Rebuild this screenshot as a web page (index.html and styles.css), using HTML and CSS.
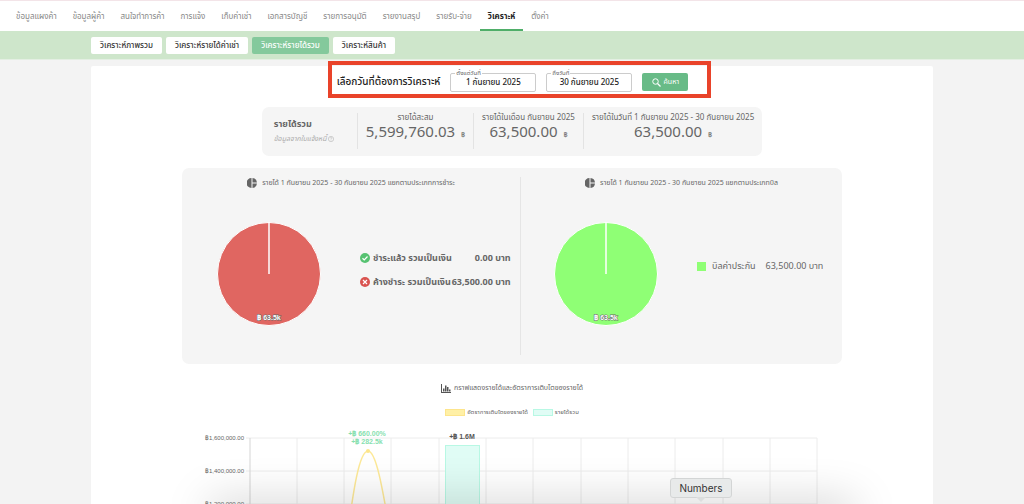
FILE: index.html
```html
<!DOCTYPE html>
<html lang="th">
  <head>
    <meta charset="UTF-8" />
    <meta name="viewport" content="width=device-width, initial-scale=1.0" />
    <title>วิเคราะห์รายได้รวม</title>
    <link rel="stylesheet" href="styles.css" />
  </head>
  <body>
    <!-- main menu -->
    <nav class="menu">
      <a class="menu-item" href="#">ข้อมูลแผงค้า</a>
      <a class="menu-item" href="#">ข้อมูลผู้ค้า</a>
      <a class="menu-item" href="#">สนใจทำการค้า</a>
      <a class="menu-item" href="#">การแจ้ง</a>
      <a class="menu-item" href="#">เก็บค่าเช่า</a>
      <a class="menu-item" href="#">เอกสารบัญชี</a>
      <a class="menu-item" href="#">รายการอนุมัติ</a>
      <a class="menu-item" href="#">รายงานสรุป</a>
      <a class="menu-item" href="#">รายรับ-จ่าย</a>
      <a class="menu-item active" href="#">วิเคราะห์</a>
      <a class="menu-item" href="#">ตั้งค่า</a>
    </nav>

    <div class="tabs">
      <button class="tab" type="button">วิเคราะห์ภาพรวม</button>
      <button class="tab" type="button">วิเคราะห์รายได้ค่าเช่า</button>
      <button class="tab active" type="button">วิเคราะห์รายได้รวม</button>
      <button class="tab" type="button">วิเคราะห์สินค้า</button>
    </div>

    <main class="card">
      <form class="search">
        <h1 class="search-title">เลือกวันที่ต้องการวิเคราะห์</h1>
        <div class="field">
          <label class="field-label" for="from">ตั้งแต่วันที่</label>
          <input class="field-input" id="from" type="text" value="1 กันยายน 2025" />
        </div>
        <div class="field">
          <label class="field-label" for="to">ถึงวันที่</label>
          <input class="field-input" id="to" type="text" value="30 กันยายน 2025" />
        </div>
        <button class="search-button" type="button">
          <svg width="9" height="9" viewBox="0 0 18 18">
            <circle cx="7" cy="7" r="5.5" fill="none" stroke="#fff" stroke-width="2" />
            <path d="M11 11l6 6" stroke="#fff" stroke-width="2.4" />
          </svg>
          ค้นหา
        </button>
      </form>

      <section class="summary">
        <div class="summary-head">
          <h2 class="summary-title">รายได้รวม</h2>
          <p class="summary-note">
            ข้อมูลจากใบแจ้งหนี้
            <svg width="6" height="6" viewBox="0 0 12 12" fill="none" stroke="#aaa">
              <circle cx="6" cy="6" r="5.3" />
              <path d="M4.3 4.7c0-2.4 3.4-2.2 3.4-.2C7.7 5.7 6 5.7 6 7.2M6 8.3v1" />
            </svg>
          </p>
        </div>
        <div class="summary-item">
          <span>รายได้สะสม</span>
          <p class="amount">5,599,760.03 <small>฿</small></p>
        </div>
        <div class="summary-item">
          <span>รายได้ในเดือน กันยายน 2025</span>
          <p class="amount">63,500.00 <small>฿</small></p>
        </div>
        <div class="summary-item">
          <span>รายได้ในวันที่ 1 กันยายน 2025 - 30 กันยายน 2025</span>
          <p class="amount">63,500.00 <small>฿</small></p>
        </div>
      </section>

      <section class="panel">
        <div class="pie-box">
          <h3 class="pie-title">
            <svg width="10" height="10" viewBox="0 0 20 20" fill="#666">
              <path d="M9 0v20A10 10 0 0 1 9 0zM11 0a10 10 0 0 1 9 9h-9zM11 11h9a10 10 0 0 1-9 9z" />
            </svg>
            รายได้ 1 กันยายน 2025 - 30 กันยายน 2025 แยกตามประเภทการชำระ
          </h3>
          <div class="pie-row">
            <svg class="pie" width="104" height="104" viewBox="0 0 104 104">
              <circle cx="52" cy="52" r="51.5" fill="#e06661" stroke="#fff" />
              <path d="M52 0v52" stroke="#fff" stroke-width="1.5" />
              <text class="pie-value" x="52" y="98">฿ 63.5k</text>
            </svg>
            <table class="legend bold">
              <tr>
                <td class="legend-icon">
                  <svg width="10" height="10" viewBox="0 0 20 20" fill="none" stroke="#fff" stroke-width="2.4">
                    <circle cx="10" cy="10" r="10" fill="#56c271" stroke="none" />
                    <path d="M5 10.5l3.5 3.5L15 7" />
                  </svg>
                </td>
                <td>ชำระแล้ว รวมเป็นเงิน</td>
                <td class="legend-value">0.00 บาท</td>
              </tr>
              <tr>
                <td class="legend-icon">
                  <svg width="10" height="10" viewBox="0 0 20 20" fill="none" stroke="#fff" stroke-width="2.4">
                    <circle cx="10" cy="10" r="10" fill="#d9534f" stroke="none" />
                    <path d="M6 6l8 8M14 6l-8 8" />
                  </svg>
                </td>
                <td>ค้างชำระ รวมเป็นเงิน</td>
                <td class="legend-value">63,500.00 บาท</td>
              </tr>
            </table>
          </div>
        </div>
        <div class="pie-box">
          <h3 class="pie-title">
            <svg width="10" height="10" viewBox="0 0 20 20" fill="#666">
              <path d="M9 0v20A10 10 0 0 1 9 0zM11 0a10 10 0 0 1 9 9h-9zM11 11h9a10 10 0 0 1-9 9z" />
            </svg>
            รายได้ 1 กันยายน 2025 - 30 กันยายน 2025 แยกตามประเภทบิล
          </h3>
          <div class="pie-row">
            <svg class="pie" width="104" height="104" viewBox="0 0 104 104">
              <circle cx="52" cy="52" r="51.5" fill="#8fff75" stroke="#fff" />
              <path d="M52 0v52" stroke="#fff" stroke-width="1.5" />
              <text class="pie-value" x="52" y="98">฿ 63.5k</text>
            </svg>
            <table class="legend single">
              <tr>
                <td class="legend-icon"><span class="swatch"></span></td>
                <td>บิลค่าประกัน</td>
                <td class="legend-value">63,500.00 บาท</td>
              </tr>
            </table>
          </div>
        </div>
      </section>

      <!-- income chart -->
      <section class="chart">
        <h3 class="chart-title">
          <svg width="10" height="9" viewBox="0 0 20 18" fill="#555">
            <path d="M0 0h2v16h18v2H0zM4 9h3v6H4zM8 3h3v12H8zM12 6h3v9h-3zM16 11h3v4h-3z" />
          </svg>
          กราฟแสดงรายได้และอัตราการเติบโตของรายได้
        </h3>
        <div class="chart-keys">
          <span class="key"><i class="key-box yellow"></i>อัตราการเติบโตของรายได้</span>
          <span class="key"><i class="key-box mint"></i>รายได้รวม</span>
        </div>
        <svg class="chart-plot" viewBox="0 0 660 120">
          <g class="grid">
            <path d="M64 20H635M64 53H635M64 86H635" />
            <path d="M115 20V120M162 20V120M209 20V120M257 20V120M304 20V120M351 20V120M399 20V120M446 20V120M493 20V120M541 20V120M588 20V120M635 20V120" />
            <path class="axis" d="M68 20V120" />
          </g>
          <rect x="263.5" y="27.5" width="34" height="100" fill="#e0fcf5" stroke="#b8f8e4" />
          <path d="M165 120C171 75 177 33 186 33S202 80 209 120" fill="none" stroke="#fde998" stroke-width="1.5" />
          <circle cx="186" cy="33" r="2" fill="#fde58c" />
          <g class="axis-text">
            <text x="62" y="22">฿1,600,000.00</text>
            <text x="62" y="55">฿1,400,000.00</text>
            <text x="62" y="88">฿1,200,000.00</text>
          </g>
          <text class="point green" x="185" y="18">+฿ 660.00%</text>
          <text class="point green" x="185" y="26">+฿ 282.5k</text>
          <text class="point" x="280" y="21">+฿ 1.6M</text>
        </svg>
      </section>
    </main>

    <div class="dock-shadow"></div>
    <div class="dock-tip">Numbers</div>
  </body>
</html>
```
FILE: styles.css
```css
* {
  box-sizing: border-box;
}

body {
  margin: 0;
  height: 100vh;
  overflow: hidden;
  display: flex;
  flex-direction: column;
  background: #f3f3f3;
  color: #666;
  font-family: "Noto Sans", "Noto Sans Thai", sans-serif;
  font-size: 8px;
}

h1,
h2,
h3,
p {
  margin: 0;
  font-weight: normal;
}

button,
input {
  font-family: inherit;
}

svg {
  flex: none;
}

/* menu */
.menu {
  flex: none;
  display: flex;
  height: 31px;
  padding-left: 8px;
  background: #fff;
  border-top: 1px solid #f3e4e8;
}

.menu-item {
  padding: 0 8px;
  line-height: 29px;
  color: #888;
  text-decoration: none;
  white-space: nowrap;
}

.menu-item.active {
  color: #222;
  font-weight: bold;
  border-bottom: 2px solid #4fae69;
}

/* tabs */
.tabs {
  flex: none;
  display: flex;
  align-items: center;
  gap: 4px;
  height: 29px;
  padding: 0 91px;
  background: #cee6cb;
  border-bottom: 1px solid #e4efe3;
}

.tab {
  height: 17px;
  padding: 0 9px;
  border: 0;
  border-radius: 2px;
  background: #fff;
  color: #333;
  font-size: 8px;
  font-weight: 500;
  white-space: nowrap;
}

.tab.active {
  background: #84c99c;
  color: #fff;
}

.card {
  flex: 1;
  display: flex;
  flex-direction: column;
  align-items: center;
  min-height: 0;
  margin: 6px 91px 0;
  background: #fff;
  border-radius: 2px 2px 0 0;
}

/* search */
.search {
  flex: none;
  display: flex;
  align-items: center;
  gap: 10px;
  height: 37px;
  margin-top: -5px;
  margin-left: 15px;
  padding: 5px 19px 0 5px;
  border: 4px solid #e9432a;
}

.search-title {
  color: #222;
  font-size: 10px;
  font-weight: 500;
  white-space: nowrap;
}

.field {
  position: relative;
}

.field-label {
  position: absolute;
  top: -4px;
  left: 5px;
  padding: 0 1px;
  background: #fff;
  font-size: 6px;
  line-height: 8px;
}

.field-input {
  display: block;
  width: 86px;
  height: 19px;
  padding: 0;
  border: 1px solid #ccc;
  border-radius: 2px;
  color: #222;
  font-size: 8px;
  font-weight: 500;
  text-align: center;
}

.search-button {
  display: flex;
  align-items: center;
  justify-content: center;
  gap: 3px;
  width: 46px;
  height: 18px;
  padding: 0;
  border: 0;
  border-radius: 2px;
  background: #68bb87;
  color: #fff;
  font-size: 7px;
}

/* summary */
.summary {
  flex: none;
  display: flex;
  height: 49px;
  margin-top: 9px;
  padding: 6px 0 7px;
  background: #f5f5f5;
  border-radius: 7px;
}

.summary-head {
  width: 95px;
  padding: 3px 0 0 12px;
}

.summary-title {
  font-size: 9px;
  font-weight: bold;
  line-height: 15px;
}

.summary-note {
  display: flex;
  align-items: center;
  gap: 1px;
  color: #aaa;
  font-size: 7px;
  font-style: italic;
  line-height: 15px;
  white-space: nowrap;
}

.summary-item {
  padding: 0 8px;
  border-left: 1px solid #e3e3e3;
  text-align: center;
  line-height: 8px;
  white-space: nowrap;
}

.amount {
  font-size: 15px;
  line-height: 20px;
}

.amount small {
  margin-left: 2px;
  font-size: 7px;
}

/* pies */
.panel {
  flex: none;
  display: grid;
  grid-template-columns: 338px 1fr;
  width: 100%;
  max-width: 660px;
  height: 196px;
  margin-top: 12px;
  padding: 9px 0;
  background: #f5f5f5;
  border-radius: 7px;
}

.pie-box + .pie-box {
  border-left: 1px solid #e5e5e5;
}

.pie-title {
  display: flex;
  align-items: center;
  justify-content: center;
  gap: 5px;
  font-size: 7px;
  line-height: 12px;
}

.pie-row {
  display: flex;
  align-items: center;
  gap: 39px;
  margin-top: 33px;
  padding-left: 35px;
}

.pie-box + .pie-box .pie-row {
  padding-left: 33px;
}

.pie-value {
  fill: #fff;
  stroke: #666;
  stroke-width: 1px;
  paint-order: stroke;
  font: bold 7px "Liberation Sans", sans-serif;
  text-anchor: middle;
}

.legend {
  margin-bottom: 8px;
  border-collapse: collapse;
  font-size: 9px;
  white-space: nowrap;
}

.legend.bold {
  font-weight: bold;
}

.legend.single {
  margin-bottom: 16px;
}

.legend td {
  height: 24px;
  padding: 0;
}

.legend .legend-icon {
  width: 13px;
}

.legend.single .legend-icon {
  width: 15px;
}

.legend-icon svg {
  display: block;
}

.legend-value {
  text-align: right;
}

.legend.single .legend-value {
  padding-left: 10px;
}

.swatch {
  display: block;
  width: 9px;
  height: 9px;
  background: #8fff75;
}

/* chart */
.chart {
  flex: none;
  width: 100%;
  max-width: 660px;
  margin-top: 18px;
}

.chart-title,
.chart-keys {
  display: flex;
  align-items: center;
  justify-content: center;
  gap: 3px;
  font-size: 7px;
  line-height: 12px;
}

.chart-keys {
  gap: 5px;
  margin-top: 12px;
}

.key {
  display: flex;
  align-items: center;
  gap: 2px;
  font-size: 6px;
}

.key-box {
  width: 20px;
  height: 7px;
  border: 1px solid;
}

.yellow {
  background: #fff0a6;
  border-color: #fde58c;
}

.mint {
  background: #e0fcf5;
  border-color: #b8f8e4;
}

.chart-plot {
  display: block;
  width: 100%;
}

.grid {
  fill: none;
  stroke: #ececec;
}

.axis {
  stroke: #d5d5d5;
}

.axis-text {
  fill: #666;
  font: 6px "Liberation Sans", sans-serif;
  text-anchor: end;
}

.point {
  fill: #555;
  font: bold 7px "Liberation Sans", sans-serif;
  text-anchor: middle;
}

.point.green {
  fill: #87dfb0;
}

/* dock */
.dock-shadow {
  position: fixed;
  right: 170px;
  bottom: -20px;
  left: 210px;
  height: 20px;
  box-shadow: 0 0 44px rgba(0, 0, 0, 0.25);
}

.dock-tip {
  position: fixed;
  bottom: 6px;
  left: 670px;
  width: 62px;
  height: 20px;
  border: 1px solid #d3d5d5;
  border-radius: 3px;
  background: #e8eaea;
  color: #333;
  font: 10px/19px Inter, sans-serif;
  text-align: center;
}

.dock-tip::after {
  content: "";
  position: absolute;
  top: 100%;
  left: 25px;
  border: 5px solid transparent;
  border-top-color: #dcdede;
}
```
